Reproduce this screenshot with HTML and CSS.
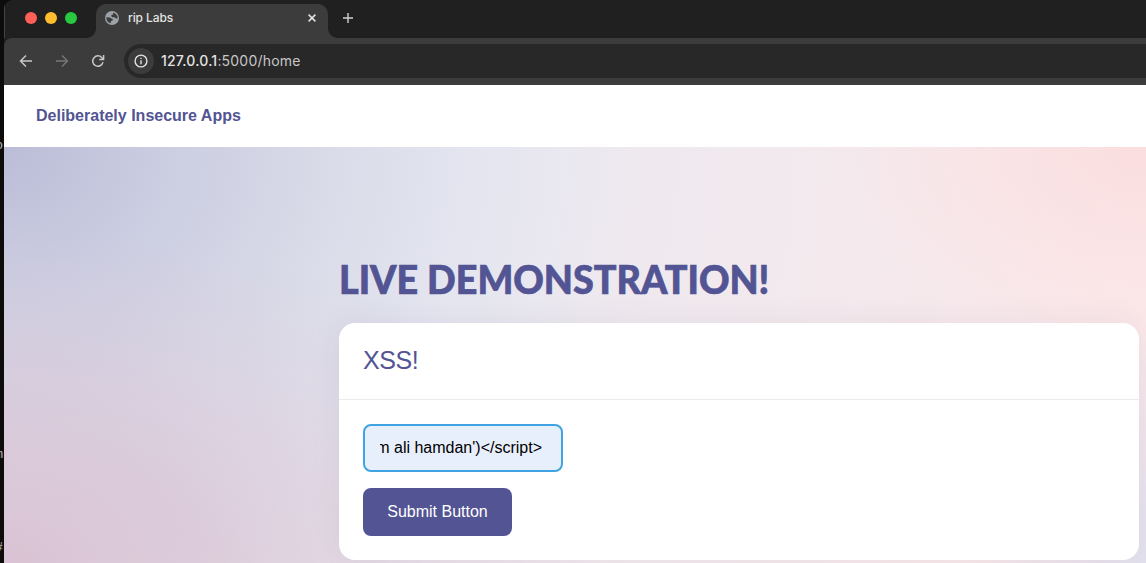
FILE: index.html
```
<!DOCTYPE html>
<html lang="en">
<head>
<meta charset="utf-8">
<title>rip Labs</title>
<link rel="stylesheet" href="styles.css">
</head>
<body>
<div class="desktop">
  <div class="edge"><span class="bit bit-a">o</span><span class="bit bit-b">m</span><span class="bit bit-c">#</span></div>
  <div class="window">
    <div class="tabstrip">
      <div class="lights"><i class="light red"></i><i class="light yellow"></i><i class="light green"></i></div>
      <div class="tab">
        <svg class="globe" width="14" height="14" viewBox="0 0 14 14"><circle cx="7" cy="7" r="7" fill="#9da2a8"/><path d="M1.3 6.2 4.4 6.4Q6.2 6.5 6.6 7.8L7.9 8.2 7.7 9.6 5.8 10.2V12.3Q1.2 11 1.3 6.2ZM8.2 1.5Q12.6 3 12.7 7.2L11.2 7.6 9.4 6.3 7.2 6.2 6.3 5.2 6.6 3.8 8.2 3.4Z" fill="#3c3c3c"/></svg>
        <span class="tab-title">rip Labs</span>
        <svg class="close" width="8" height="8" viewBox="0 0 8 8"><path d="M.6.6 7.4 7.4M7.4.6.6 7.4" stroke="#e3e3e3" stroke-width="1.5"/></svg>
      </div>
      <svg class="plus" width="10" height="10" viewBox="0 0 10 10"><path d="M5 0V10M0 5H10" stroke="#d0d0d0" stroke-width="1.4"/></svg>
    </div>
    <div class="toolbar">
      <svg class="nav" width="14" height="14" viewBox="0 0 14 14"><path d="M13 7H1.8M7 1.5 1.5 7 7 12.5" fill="none" stroke="#c7c7c7" stroke-width="1.5"/></svg>
      <svg class="nav" width="14" height="14" viewBox="0 0 14 14"><path d="M1 7H12.2M7 1.5 12.5 7 7 12.5" fill="none" stroke="#777" stroke-width="1.4"/></svg>
      <svg class="nav" width="14" height="14" viewBox="0 0 14 14"><path d="M12 8.2A5.2 5.2 0 1 1 11.2 4.1L12.5 5.4M12.6 1V5.5H8.2" fill="none" stroke="#c7c7c7" stroke-width="1.5"/></svg>
      <div class="address">
        <span class="info"><svg width="14" height="14" viewBox="0 0 14 14"><circle cx="7" cy="7" r="5.9" fill="none" stroke="#e3e3e3" stroke-width="1.4"/><path d="M7 6.3V10.2M7 3.7V5.1" stroke="#e3e3e3" stroke-width="1.4"/></svg></span>
        <span class="url"><b>127.0.0.1</b>:5000/home</span>
      </div>
    </div>
    <header class="site-header"><span class="brand">Deliberately Insecure Apps</span></header>
    <main class="hero">
      <h1 class="heading">LIVE DEMONSTRATION!</h1>
      <section class="card">
        <h2 class="card-title">XSS!</h2>
        <div class="card-body">
          <div class="field"><div class="field-clip"><span class="field-text">m ali hamdan')&lt;/script&gt;</span></div></div>
          <button class="submit">Submit Button</button>
        </div>
      </section>
    </main>
  </div>
</div>
</body>
</html>
```
FILE: styles.css
```
* { box-sizing: border-box; }
body { margin: 0; font-family: "Liberation Sans", Arial, sans-serif; }
.desktop { display: flex; width: 1146px; height: 563px; overflow: hidden; background: #0e0c0b; }
.edge { position: relative; flex: 0 0 4px; overflow: hidden; }
.bit { position: absolute; right: 1px; font: 13px/14px "Liberation Mono", monospace; color: #bbb; }
.bit-a { top: 139px; }
.bit-b { top: 448px; }
.bit-c { top: 541px; }
.window { flex: 1; display: flex; flex-direction: column; min-width: 0; background: #202020; border-top-left-radius: 9px; overflow: hidden; }
.tabstrip { flex: 0 0 38px; display: flex; padding-top: 4px; background: #202020; box-shadow: inset 1px 0 #444; }
.lights { display: flex; gap: 8px; width: 92px; padding: 8px 0 0 21px; }
.light { width: 12px; height: 12px; border-radius: 50%; }
.red { background: #ff5f57; }
.yellow { background: #febc2e; }
.green { background: #28c840; }
.tab { position: relative; display: flex; align-items: center; width: 232px; height: 34px; padding: 0 12px 6px 9px; background: #3c3c3c; border-radius: 10px 10px 0 0; }
.tab::before, .tab::after { content: ""; position: absolute; bottom: 0; width: 10px; height: 10px; }
.tab::before { left: -10px; background: radial-gradient(circle at 0 0, transparent 9.5px, #3c3c3c 10.5px); }
.tab::after { right: -10px; background: radial-gradient(circle at 100% 0, transparent 9.5px, #3c3c3c 10.5px); }
.tab-title { margin-left: 9px; font: 500 12px/16px Inter, sans-serif; letter-spacing: -.1px; color: #e3e3e3; }
.close { margin-left: auto; }
.plus { margin: 9px 0 0 15px; }
.toolbar { flex: 0 0 47px; display: flex; align-items: center; padding-left: 15px; background: #3c3c3c; border-top-left-radius: 8px; }
.nav { flex: none; margin: 0 22px 1px 0; }
.address { flex: 1; display: flex; align-items: center; height: 34px; margin: 0 0 1px -3px; padding-left: 4px; background: #282828; border-radius: 17px 0 0 17px; }
.info { display: grid; place-items: center; width: 26px; height: 26px; border-radius: 50%; background: #3c3c3c; }
.url { margin-left: 7px; font: 400 14px/20px Inter, sans-serif; letter-spacing: .2px; color: #c7c7c7; }
.url b { font-weight: 500; color: #e3e3e3; }
.site-header { flex: 0 0 62px; display: flex; align-items: center; padding-left: 32px; background: #fff; }
.brand { font-size: 16px; font-weight: 700; color: #525493; }
.hero {
  flex: 1;
  padding: 107px 7px 0 335px;
  background:
    radial-gradient(ellipse 600px 340px at 0 100%, rgba(217, 195, 212, 1), rgba(217, 195, 212, .72) 35%, rgba(217, 195, 212, .28) 70%, rgba(217, 195, 212, 0)),
    radial-gradient(ellipse 180px 240px at 100% 100%, rgba(227, 225, 238, 1), rgba(227, 225, 238, 0)),
    radial-gradient(ellipse 320px 200px at 100% 0, rgba(251, 221, 221, .9), rgba(251, 221, 221, .35) 55%, rgba(251, 221, 221, 0)),
    radial-gradient(ellipse 1160px 1000px at 0 0, #bbbdd8 0, #cbcde1 14%, #dadce9 29%, #e5e6f0 42%, #eee9ef 54%, #f4e9ed 75%, #fbe8ea 100%);
}
.heading { margin: 0; font: 900 40px/50px Lato, sans-serif; color: #525493; white-space: nowrap; transform: scaleX(.942); transform-origin: 0 0; -webkit-text-stroke: .7px #525493; }
.card { height: 237px; margin-top: 19px; background: #fff; border-radius: 16px; box-shadow: 0 0 32px rgba(60, 50, 90, .07); }
.card-title { height: 77px; margin: 0; padding: 22px 24px; border-bottom: 1px solid #ebebeb; font-size: 25px; line-height: 31px; font-weight: 400; letter-spacing: -.4px; color: #525493; }
.card-body { display: flex; flex-direction: column; align-items: flex-start; gap: 16px; padding: 24px; }
.field { width: 200px; height: 48px; padding: 0 19px 0 15px; border: 2px solid #3fa4e1; border-radius: 8px; background: #e8effc; }
.field-clip { display: flex; justify-content: flex-end; height: 44px; overflow: hidden; }
.field-text { flex: none; font-size: 16px; line-height: 44px; color: #000; }
.submit { width: 149px; height: 48px; padding: 0; border: 0; border-radius: 8px; background: #525493; color: #fff; font: 16px/48px "Liberation Sans", Arial, sans-serif; }
```
